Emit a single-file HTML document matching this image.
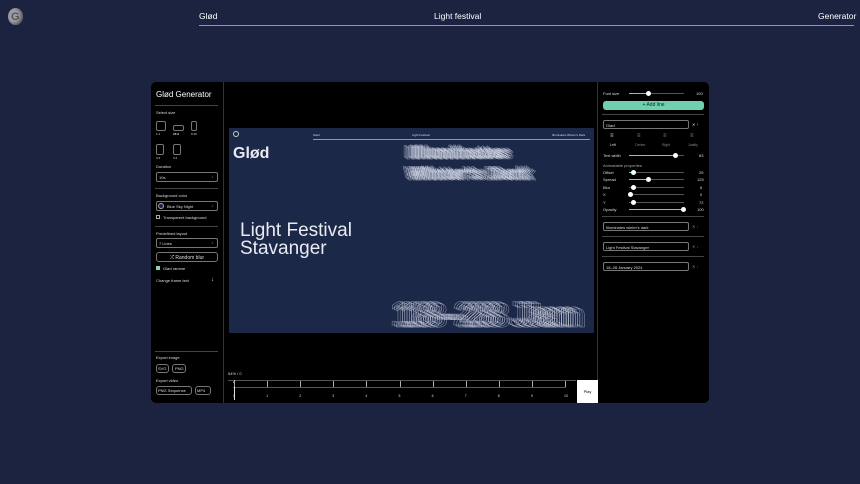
<!DOCTYPE html>
<html><head><meta charset="utf-8"><style>
*{box-sizing:border-box;margin:0;padding:0}
body{width:860px;height:484px;background:#1b2341;font-family:"Liberation Sans",sans-serif;color:#fff;position:relative;overflow:hidden}
.a{position:absolute}
.t{font-size:4px;color:#ddd;white-space:nowrap}
.box{border:1px solid #777;border-radius:2px}
.sl{position:absolute;height:1px;background:#555}
.sl i{position:absolute;left:0;top:0;height:1px;background:#6fcfb0}
.sl b{position:absolute;top:-2px;width:5px;height:5px;border-radius:50%;background:#fff}
.hr{position:absolute;height:1px;background:#444}
.blob{position:absolute;white-space:nowrap;color:transparent;-webkit-text-stroke:0.5px rgba(220,225,240,.55)}
</style></head><body>
<!-- top nav -->
<div class="a" style="left:8px;top:8px;width:15px;height:17px;border-radius:50%;background:#9a9ea8;box-shadow:inset -2px -1px 3px #555"></div>
<div class="a" style="left:11px;top:11px;font-size:11px;font-weight:bold;color:#555">G</div>
<div class="a" style="left:199px;top:11px;font-size:8.5px">Glød</div>
<div class="a" style="left:434px;top:11px;font-size:8.5px">Light festival</div>
<div class="a" style="left:818px;top:11px;font-size:8.5px">Generator</div>
<div class="a" style="left:199px;top:25px;width:655px;height:1px;background:#8e97b5"></div>

<!-- app panel -->
<div class="a" style="left:151px;top:82px;width:558px;height:321px;background:#000;border-radius:5px;overflow:hidden">
 <div class="a" style="left:72px;top:0;width:1px;height:321px;background:#333"></div>
 <div class="a" style="left:446px;top:0;width:1px;height:321px;background:#333"></div>
</div>

<!-- left sidebar -->
<div class="a" style="left:156px;top:90px;font-size:8px">Glød Generator</div>
<div class="hr" style="left:155px;top:105px;width:63px"></div>
<div class="a t" style="left:156px;top:110px">Select size</div>
<div class="a box" style="left:156px;top:121px;width:10px;height:10px"></div>
<div class="a box" style="left:173px;top:125px;width:11px;height:6px"></div>
<div class="a box" style="left:191px;top:121px;width:6px;height:10px"></div>
<div class="a t" style="left:156px;top:132px;font-size:3px">1:1</div>
<div class="a t" style="left:173px;top:132px;font-size:3px;font-weight:bold">16:9</div>
<div class="a t" style="left:191px;top:132px;font-size:3px">9:16</div>
<div class="a box" style="left:156px;top:144px;width:8px;height:11px"></div>
<div class="a box" style="left:173px;top:144px;width:8px;height:11px"></div>
<div class="a t" style="left:156px;top:156px;font-size:3px">4:3</div>
<div class="a t" style="left:173px;top:156px;font-size:3px">3:4</div>
<div class="a t" style="left:156px;top:164px">Duration</div>
<div class="a box" style="left:156px;top:172px;width:62px;height:10px"></div>
<div class="a t" style="left:159px;top:175px">10s</div><div class="a t" style="left:211px;top:174px">↓</div>
<div class="hr" style="left:155px;top:188px;width:63px"></div>
<div class="a t" style="left:156px;top:193px">Background color</div>
<div class="a box" style="left:156px;top:201px;width:62px;height:10px"></div>
<div class="a" style="left:158px;top:203px;width:6px;height:6px;border-radius:50%;border:1px solid #aaa;background:#1b2341"></div>
<div class="a t" style="left:167px;top:204px">Blue Sky Night</div><div class="a t" style="left:211px;top:203px">↓</div>
<div class="a" style="left:156px;top:215px;width:4px;height:4px;border:1px solid #aaa"></div>
<div class="a t" style="left:163px;top:215px">Transparent background</div>
<div class="hr" style="left:155px;top:226px;width:63px"></div>
<div class="a t" style="left:156px;top:231px">Predefined layout</div>
<div class="a box" style="left:156px;top:238px;width:62px;height:10px"></div>
<div class="a t" style="left:159px;top:241px">7 Lines</div><div class="a t" style="left:211px;top:240px">↓</div>
<div class="a box" style="left:156px;top:252px;width:62px;height:10px;border-radius:3px"></div>
<div class="a t" style="left:170px;top:255px;font-size:5px">⤮ Random blur</div>
<div class="a" style="left:156px;top:266px;width:4px;height:4px;background:#8ed1b4"></div>
<div class="a t" style="left:163px;top:266px">Glød ramme</div>
<div class="a t" style="left:156px;top:278px">Change frame text</div><div class="a t" style="left:211px;top:277px;font-size:6px">↓</div>
<div class="hr" style="left:155px;top:351px;width:63px"></div>
<div class="a t" style="left:156px;top:355px">Export image</div>
<div class="a box" style="left:156px;top:364px;width:13px;height:9px;border-radius:3px"></div><div class="a t" style="left:158px;top:366px">SVG</div>
<div class="a box" style="left:172px;top:364px;width:14px;height:9px;border-radius:3px"></div><div class="a t" style="left:175px;top:366px">PNG</div>
<div class="a t" style="left:156px;top:378px">Export video</div>
<div class="a box" style="left:156px;top:386px;width:36px;height:9px;border-radius:3px"></div><div class="a t" style="left:158px;top:388px">PNG Sequence</div>
<div class="a box" style="left:195px;top:386px;width:16px;height:9px;border-radius:3px"></div><div class="a t" style="left:197px;top:388px">MP4</div>

<!-- canvas -->
<div class="a" style="left:229px;top:128px;width:365px;height:205px;background:#1c2847;overflow:hidden">
 <div class="a" style="left:4px;top:3px;width:6px;height:6px;border-radius:50%;border:1px solid #ccc"></div>
 <div class="a t" style="left:84px;top:5px;font-size:3px">Glød</div>
 <div class="a t" style="left:183px;top:5px;font-size:3px">Light Festival</div>
 <div class="a t" style="left:323px;top:5px;font-size:3px">Illuminates Winter's Dark</div>
 <div class="a" style="left:84px;top:11px;width:277px;height:1px;background:#8e97b5"></div>
 <div class="a" style="left:4px;top:17px;font-size:16px;font-weight:bold;color:#e8ebf2">Glød</div>
 <div class="a" style="left:11px;top:94px;font-size:19px;line-height:18px;color:#e8ebf2">Light Festival<br>Stavanger</div>
 <div id="b1"></div>
</div>

<!-- timeline -->
<div class="a t" style="left:228px;top:371px">54% / 0</div>
<div class="a" style="left:228px;top:380px;width:348px;height:1px;background:#555"></div>
<div class="a" style="left:233px;top:387px;width:333px;height:1px;background:#555"></div>
<div class="a" style="left:234px;top:380px;width:1px;height:20px;background:#ddd"></div>
<div class="a t" style="left:233px;top:380px;font-size:3px">◆</div>
<div id="tl"></div>
<div class="a" style="left:577px;top:380px;width:21px;height:23px;background:#fff;color:#000;font-size:4px;text-align:center;line-height:23px">Play</div>

<!-- right panel -->
<div class="a t" style="left:603px;top:91px">Font size</div>
<div class="sl" style="left:629px;top:93px;width:55px"><i style="width:19px"></i><b style="left:17px"></b></div>
<div class="a t" style="left:696px;top:91px">100</div>
<div class="a" style="left:603px;top:101px;width:101px;height:9px;background:#6fcfb0;border-radius:3px;color:#0b2a20;font-size:5px;text-align:center;line-height:9px">+ Add line</div>
<div class="hr" style="left:602px;top:114px;width:102px"></div>
<div class="a box" style="left:603px;top:120px;width:86px;height:9px"></div><div class="a t" style="left:606px;top:123px">Glød</div>
<div class="a t" style="left:692px;top:122px">✕ ↑</div>
<div class="a t" style="left:610px;top:133px;font-size:6px">≡</div><div class="a t" style="left:637px;top:133px;font-size:6px;color:#888">≡</div><div class="a t" style="left:663px;top:133px;font-size:6px;color:#888">≡</div><div class="a t" style="left:690px;top:133px;font-size:6px;color:#888">≡</div>
<div class="a t" style="left:610px;top:143px;font-size:3.5px">Left</div><div class="a t" style="left:635px;top:143px;font-size:3.5px;color:#888">Center</div><div class="a t" style="left:662px;top:143px;font-size:3.5px;color:#888">Right</div><div class="a t" style="left:688px;top:143px;font-size:3.5px;color:#888">Justify</div>
<div class="a t" style="left:603px;top:153px">Text width</div>
<div class="sl" style="left:629px;top:155px;width:55px"><i style="width:46px"></i><b style="left:44px"></b></div>
<div class="a t" style="left:699px;top:153px">83</div>
<div class="a t" style="left:603px;top:163px;color:#aaa">Animatable properties</div>
<div class="a t" style="left:603px;top:170px">Offset</div><div class="sl" style="left:629px;top:172px;width:55px"><i style="width:4px"></i><b style="left:2px"></b></div><div class="a t" style="left:699px;top:170px">25</div>
<div class="a t" style="left:603px;top:177px">Spread</div><div class="sl" style="left:629px;top:179px;width:55px"><i style="width:20px"></i><b style="left:17px"></b></div><div class="a t" style="left:697px;top:177px">125</div>
<div class="a t" style="left:603px;top:185px">Blur</div><div class="sl" style="left:629px;top:187px;width:55px"><b style="left:2px"></b></div><div class="a t" style="left:700px;top:185px">6</div>
<div class="a t" style="left:603px;top:192px">X</div><div class="sl" style="left:629px;top:194px;width:55px"><b style="left:-1px"></b></div><div class="a t" style="left:700px;top:192px">0</div>
<div class="a t" style="left:603px;top:200px">Y</div><div class="sl" style="left:629px;top:202px;width:55px"><b style="left:2px"></b></div><div class="a t" style="left:699px;top:200px">72</div>
<div class="a t" style="left:603px;top:207px">Opacity</div><div class="sl" style="left:629px;top:209px;width:55px"><i style="width:55px"></i><b style="left:52px"></b></div><div class="a t" style="left:697px;top:207px">100</div>
<div class="hr" style="left:602px;top:216px;width:102px"></div>
<div class="a box" style="left:603px;top:222px;width:86px;height:9px"></div><div class="a t" style="left:606px;top:225px">Illuminates winter's dark</div><div class="a t" style="left:692px;top:224px;color:#888">✕ ↓</div>
<div class="hr" style="left:602px;top:236px;width:102px"></div>
<div class="a box" style="left:603px;top:242px;width:86px;height:9px"></div><div class="a t" style="left:606px;top:245px">Light Festival Stavanger</div><div class="a t" style="left:692px;top:244px;color:#888">✕ ↓</div>
<div class="hr" style="left:602px;top:256px;width:102px"></div>
<div class="a box" style="left:603px;top:262px;width:86px;height:9px"></div><div class="a t" style="left:606px;top:265px">18–28 January 2024</div><div class="a t" style="left:692px;top:264px;color:#888">✕ ↓</div>

<script>
var h='';for(var i=0;i<=10;i++){var x=234+i*33.1;h+='<div class="a" style="left:'+x+'px;top:381px;width:1px;height:6px;background:#aaa"></div><div class="a t" style="left:'+(x-1)+'px;top:394px;font-size:3.5px">'+i+'</div>';}
document.getElementById('tl').outerHTML=h;
var b='';
for(var k=0;k<9;k++){var dx=k*1.5-6,dy=(k%3)-1;
b+='<div class="blob" style="left:'+(180+dx)+'px;top:'+(14+dy)+'px;font-size:17px;line-height:21px;letter-spacing:1px;font-weight:bold">Illuminates<br>Winter\'s Dark</div>';
b+='<div class="blob" style="left:'+(170+dx*1.5)+'px;top:'+(168+dy)+'px;font-size:34px;letter-spacing:2px;font-weight:bold">18–28 Jan</div>';}
document.getElementById('b1').outerHTML=b;
</script>
</body></html>
